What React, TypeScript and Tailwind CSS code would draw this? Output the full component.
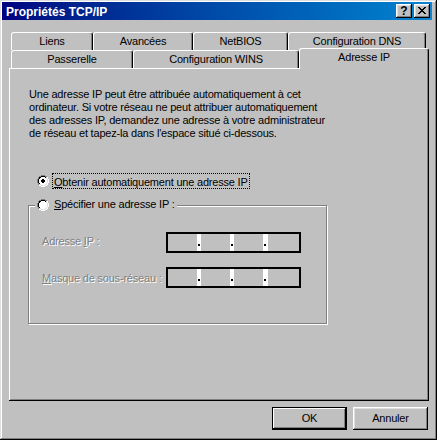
import React from "react";

const COLORS: Record<string, string> = {
  G: "#808080",
  K: "#000000",
  W: "#ffffff",
  L: "#dfdfdf",
  w: "#ffffff",
  D: "#000000",
};

function Pixels({ rows, w, h }: { rows: string[]; w: number; h: number }) {
  const rects: React.ReactElement[] = [];
  rows.forEach((row, y) => {
    row.split("").forEach((c, x) => {
      if (COLORS[c]) {
        rects.push(<rect key={`${x}-${y}`} x={x} y={y} width={1} height={1} fill={COLORS[c]} />);
      }
    });
  });
  return (
    <svg width={w} height={h} viewBox={`0 0 ${w} ${h}`} shapeRendering="crispEdges" className="block shrink-0">
      {rects}
    </svg>
  );
}

const RADIO_OFF = [
  "....GGGG....",
  "..GGKKKKGG..",
  ".GKKwwwwKLW.",
  ".GKwwwwwwLW.",
  "GKwwwwwwwwLW",
  "GKwwwwwwwwLW",
  "GKwwwwwwwwLW",
  "GKwwwwwwwwLW",
  ".GKwwwwwwLW.",
  ".GLLwwwwLLW.",
  "..WWLLLLWW..",
  "....WWWW....",
];

const RADIO_ON = [
  "....GGGG....",
  "..GGKKKKGG..",
  ".GKKwwwwKLW.",
  ".GKwwwwwwLW.",
  "GKwwwDDwwwLW",
  "GKwwDDDDwwLW",
  "GKwwDDDDwwLW",
  "GKwwwDDwwwLW",
  ".GKwwwwwwLW.",
  ".GLLwwwwLLW.",
  "..WWLLLLWW..",
  "....WWWW....",
];

const CLOSE = [
  "KK....KK",
  ".KK..KK.",
  "..KKKK..",
  "...KK...",
  "..KKKK..",
  ".KK..KK.",
  "KK....KK",
];

function Radio({ checked }: { checked: boolean }) {
  return <Pixels rows={checked ? RADIO_ON : RADIO_OFF} w={12} h={12} />;
}

function Tab({ label, w, selected }: { label: string; w: string; selected?: boolean }) {
  const base =
    "shrink-0 border-t border-l border-r border-t-white border-l-white border-r-black rounded-t-[3px] shadow-[inset_-1px_0_#808080] pt-[2px] text-center bg-[#c0c0c0] whitespace-nowrap";
  if (selected) {
    return <div className={`${base} ${w} relative z-10 -mt-[2px] h-[21px]`}>{label}</div>;
  }
  return <div className={`${base} ${w} h-[18px]`}>{label}</div>;
}

function Seg({ w }: { w: string }) {
  return <div className={`${w} h-full bg-[#c0c0c0]`} />;
}

function Gap({ w }: { w: string }) {
  return (
    <div className={`${w} h-full flex flex-col pt-[10px] pl-[1px]`}>
      <div className="w-[2px] h-[2px] bg-black" />
    </div>
  );
}

function IpField() {
  return (
    <div className="w-[135px] h-[21px] border-2 border-black bg-white flex shrink-0">
      <Seg w="w-[29px]" />
      <Gap w="w-[4px]" />
      <Seg w="w-[29px]" />
      <Gap w="w-[4px]" />
      <Seg w="w-[29px]" />
      <Gap w="w-[5px]" />
      <Seg w="w-[31px]" />
    </div>
  );
}

const bevel =
  "shadow-[inset_-1px_-1px_#000,inset_1px_1px_#fff,inset_-2px_-2px_#808080,inset_2px_2px_#dfdfdf]";

export default function App() {
  return (
    <div className="w-[437px] h-[440px] bg-[#c0c0c0] flex flex-col overflow-hidden font-['Liberation_Sans',Arial,sans-serif] text-[11px] leading-[13px] tracking-[-0.2px] text-black shadow-[inset_-1px_-1px_#000,inset_1px_1px_#dfdfdf,inset_-2px_-2px_#808080,inset_2px_2px_#fff]">
      {/* Title bar */}
      <div className="ml-[2px] mt-[2px] w-[430px] h-[18px] shrink-0 bg-linear-to-r from-[#000080] to-[#1084d0] flex items-center pl-[4px] pr-[2px]">
        <span className="text-white font-bold text-[12px] leading-[18px] tracking-normal translate-y-[1px]">
          Propriétés TCP/IP
        </span>
        <div className="ml-auto flex gap-[2px]">
          <div className={`w-[16px] h-[14px] bg-[#c0c0c0] ${bevel} flex items-center justify-center`}>
            <span className="font-bold text-[12px] leading-none tracking-normal -translate-y-[0.5px]">?</span>
          </div>
          <div className={`w-[16px] h-[14px] bg-[#c0c0c0] ${bevel} flex items-start pl-[4px] pt-[3px]`}>
            <Pixels rows={CLOSE} w={8} h={7} />
          </div>
        </div>
      </div>

      {/* Tabs */}
      <div className="pl-[11px] mt-[12px] flex flex-col shrink-0">
        <div className="flex h-[18px]">
          <Tab label="Liens" w="w-[82px]" />
          <Tab label="Avancées" w="w-[100px]" />
          <Tab label="NetBIOS" w="w-[95px]" />
          <Tab label="Configuration DNS" w="w-[138px]" />
        </div>
        <div className="flex h-[18px] items-start">
          <Tab label="Passerelle" w="w-[122px]" />
          <Tab label="Configuration WINS" w="w-[166px]" />
          <Tab label="Adresse IP" w="w-[130px]" selected />
        </div>
      </div>

      {/* Panel */}
      <div className="ml-[9px] w-[420px] h-[333px] shrink-0 flex flex-col pt-[20px] shadow-[inset_-1px_-1px_#000,inset_1px_1px_#fff,inset_-2px_-2px_#808080]">
        <p className="ml-[20px] whitespace-nowrap">
          Une adresse IP peut être attribuée automatiquement à cet
          <br />
          ordinateur. Si votre réseau ne peut attribuer automatiquement
          <br />
          des adresses IP, demandez une adresse à votre administrateur
          <br />
          de réseau et tapez-la dans l'espace situé ci-dessous.
        </p>

        <div className="ml-[28px] mt-[33px] flex items-start h-[16px]">
          <div className="mt-[2px]">
            <Radio checked />
          </div>
          <div className="ml-[3px] h-[16px] border border-dotted border-black px-[1px] pt-[2px] whitespace-nowrap">
            <span className="underline underline-offset-[1px]">O</span>btenir automatiquement une adresse IP
          </div>
        </div>

        <div className="ml-[19px] mt-[16px] relative w-[299px] h-[119px] border border-[#808080] shadow-[inset_1px_1px_#fff,1px_1px_#fff] flex flex-col">
          <div className="absolute left-[6px] top-[-8px] flex items-start h-[13px] bg-[#c0c0c0] pl-[2px] pr-[2px]">
            <div className="mt-[1px]">
              <Radio checked={false} />
            </div>
            <span className="ml-[5px] whitespace-nowrap">
              <span className="underline underline-offset-[1px]">S</span>pécifier une adresse IP :
            </span>
          </div>

          <div className="mt-[26px] ml-[13px] flex h-[21px]">
            <div className="w-[124px] pt-[3px] whitespace-nowrap text-[#808080] [text-shadow:1px_1px_0_#fff]">
              Adresse <span className="underline underline-offset-[1px]">I</span>P :
            </div>
            <IpField />
          </div>

          <div className="mt-[14px] ml-[13px] flex h-[21px]">
            <div className="w-[124px] pt-[5px] whitespace-nowrap text-[#808080] [text-shadow:1px_1px_0_#fff]">
              <span className="underline underline-offset-[1px]">M</span>asque de sous-réseau :
            </div>
            <IpField />
          </div>
        </div>
      </div>

      {/* Buttons */}
      <div className="mt-[6px] flex justify-end gap-[6px] pr-[9px]">
        <div className="w-[75px] h-[23px] border border-black shadow-[inset_-1px_-1px_#000,inset_1px_1px_#fff,inset_-2px_-2px_#808080] flex items-center justify-center">
          OK
        </div>
        <div className={`w-[75px] h-[23px] ${bevel} flex items-center justify-center`}>Annuler</div>
      </div>
    </div>
  );
}
